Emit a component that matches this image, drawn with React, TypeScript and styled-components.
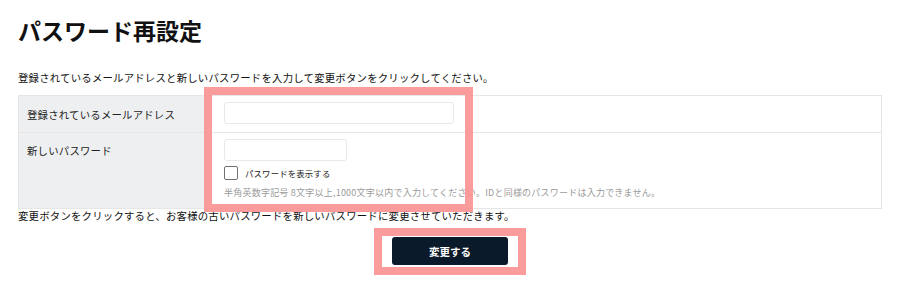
import React from 'react';
import styled, { createGlobalStyle } from 'styled-components';

const GlobalStyle = createGlobalStyle`
    body {
        margin: 0;
        background: #fff;
        color: #111;
        font-family: "Noto Sans CJK JP", "Noto Sans", sans-serif;
    }
`;

const Page = styled.div`
    position: relative;
    width: 900px;
    height: 291px;
    box-sizing: border-box;
    padding: 14px 18px 0;
    overflow: hidden;
`;

const Title = styled.h1`
    margin: 0;
    font-size: 23px;
    line-height: 33px;
    font-weight: 700;
    color: #111;
`;

const Lead = styled.p<{ $top: number; $lh: number }>`
    margin: ${props => props.$top}px 0 0;
    font-size: 10.4px;
    line-height: ${props => props.$lh}px;
    letter-spacing: 0.02em;
    color: #111;
`;

const FormTable = styled.table`
    width: 100%;
    margin-top: 10px;
    border-collapse: collapse;
    border: 1px solid #e6e6e6;
`;

const Row = styled.tr`
    border-bottom: 1px solid #e6e6e6;
`;

const LabelCell = styled.th<{ $top?: boolean }>`
    width: 180px;
    padding: ${props => (props.$top ? '10px 0 0 8px' : '0 0 0 8px')};
    vertical-align: ${props => (props.$top ? 'top' : 'middle')};
    background: #eeeff1;
    font-size: 10.4px;
    line-height: 15px;
    font-weight: 400;
    letter-spacing: 0.02em;
    text-align: left;
    color: #222;
`;

const ValueCell = styled.td<{ $pad: string }>`
    padding: ${props => props.$pad};
    vertical-align: top;
`;

const TextInput = styled.input<{ $width: number }>`
    display: block;
    width: ${props => props.$width}px;
    height: 22px;
    box-sizing: border-box;
    border: 1px solid #e9e9e9;
    border-radius: 3px;
    background: #fff;
    outline: none;
`;

const CheckRow = styled.label`
    display: flex;
    align-items: center;
    gap: 7px;
    margin-top: 5px;
    height: 14px;
    font-size: 8.4px;
    letter-spacing: 0.02em;
    color: #222;
`;

const Box = styled.span`
    width: 14px;
    height: 14px;
    box-sizing: border-box;
    border: 1px solid #707070;
    border-radius: 2px;
    background: #fff;
`;

const Note = styled.p`
    margin: 6px 0 0;
    font-size: 9px;
    line-height: 13px;
    letter-spacing: 0.025em;
    color: #9a9a9a;
`;

const Actions = styled.div`
    display: flex;
    justify-content: center;
    margin-top: 15px;
`;

const SubmitButton = styled.button`
    width: 116px;
    height: 28px;
    border: none;
    border-radius: 3px;
    background: #0b1a2a;
    color: #fff;
    font-family: inherit;
    font-size: 10.5px;
    font-weight: 700;
`;

// annotation frames drawn over the screenshot
const Highlight = styled.div<{ $x: number; $y: number; $w: number; $h: number }>`
    position: absolute;
    left: ${props => props.$x}px;
    top: ${props => props.$y}px;
    width: ${props => props.$w}px;
    height: ${props => props.$h}px;
    box-sizing: border-box;
    border: 8px solid rgba(251, 145, 145, 0.9);
    pointer-events: none;
`;

function App() {
    return (
        <Page>
            <GlobalStyle />
            <Title>パスワード再設定</Title>
            <Lead $top={23} $lh={15}>
                登録されているメールアドレスと新しいパスワードを入力して変更ボタンをクリックしてください。
            </Lead>
            <FormTable>
                <tbody>
                    <Row>
                        <LabelCell>登録されているメールアドレス</LabelCell>
                        <ValueCell $pad="6px 0 8px 17px">
                            <TextInput type="email" $width={230} />
                        </ValueCell>
                    </Row>
                    <Row>
                        <LabelCell $top>新しいパスワード</LabelCell>
                        <ValueCell $pad="6px 0 9px 17px">
                            <TextInput type="password" $width={123} />
                            <CheckRow>
                                <Box />
                                パスワードを表示する
                            </CheckRow>
                            <Note>
                                半角英数字記号 8文字以上,1000文字以内で入力してください。IDと同様のパスワードは入力できません。
                            </Note>
                        </ValueCell>
                    </Row>
                </tbody>
            </FormTable>
            <Lead $top={0} $lh={13}>
                変更ボタンをクリックすると、お客様の古いパスワードを新しいパスワードに変更させていただきます。
            </Lead>
            <Actions>
                <SubmitButton>変更する</SubmitButton>
            </Actions>
            <Highlight $x={204} $y={87} $w={269} $h={125} />
            <Highlight $x={374} $y={228} $w={152} $h={47} />
        </Page>
    );
}

export default App;
